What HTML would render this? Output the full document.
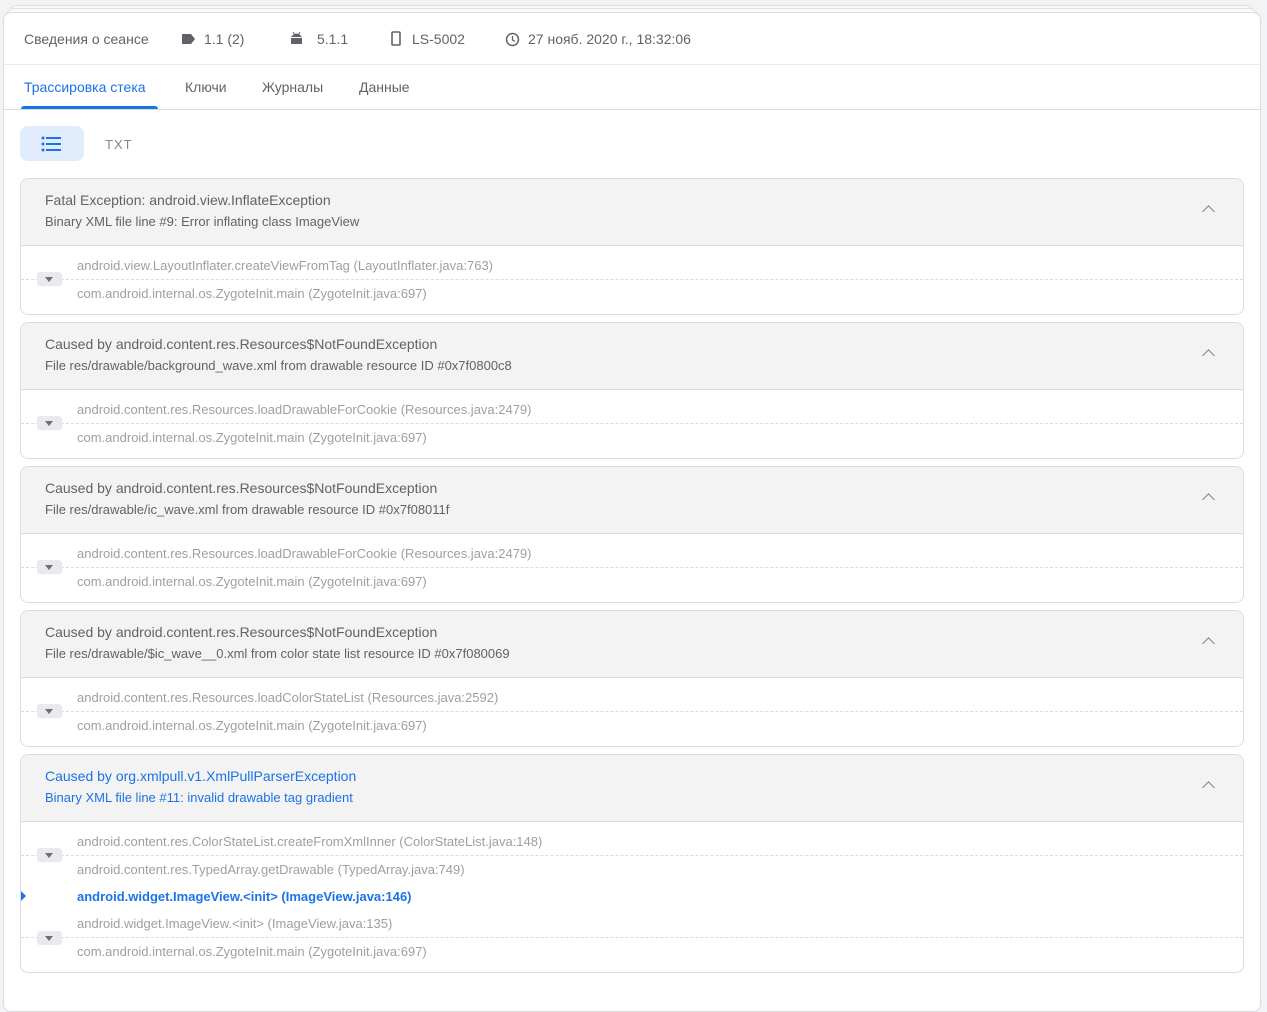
<!DOCTYPE html>
<html><head><meta charset="utf-8"><style>
*{box-sizing:border-box;margin:0;padding:0}
body{width:1267px;height:997px;background:#f1f3f4;font-family:"Liberation Sans",sans-serif;overflow:hidden;position:relative}
.stack1{position:absolute;left:9px;top:5px;width:1245px;height:20px;border:1px solid #e0e0e0;border-radius:8px;background:#fafafa}
.stack2{position:absolute;left:6px;top:8px;width:1251px;height:20px;border:1px solid #e0e0e0;border-radius:8px;background:#fafafa}
.card{position:absolute;left:3px;top:12px;width:1258px;height:1000px;background:#fff;border:1px solid #dadce0;border-radius:8px}
.hdr{position:absolute;top:0;left:0;right:0;height:52px;border-bottom:1px solid #e8eaed;font-size:14px;color:#5f6368}
.hdr span{position:absolute;top:18px}
.tabs{position:absolute;top:52px;left:0;right:0;height:45px;border-bottom:1px solid #dadce0;font-size:14px;color:#5f6368}
.tabs span{position:absolute;top:14px}
.ind{position:absolute;left:17px;top:41px;width:137px;height:3px;background:#1a73e8;border-radius:3px 3px 0 0}
.tgl{position:absolute;left:16px;top:113px;width:64px;height:35px;background:#e1ecfc;border-radius:8px}
.txt{position:absolute;left:101px;top:124px;font-size:13px;color:#888;letter-spacing:1px}
.ex{position:absolute;left:16px;width:1224px;border:1px solid #dadce0;border-radius:8px;overflow:hidden;background:#fff}
.eh{height:67px;background:#f3f3f3;border-bottom:1px solid #dadce0;position:relative;padding:12px 0 0 24px}
.t1{font-size:14px;color:#5f6368;line-height:18px}
.t2{font-size:13px;color:#5f6368;margin-top:5px;line-height:16px}
.blue .t1,.blue .t2{color:#1a73e8}
.chev{position:absolute;right:30px;top:28px;width:9px;height:9px;border-left:1.6px solid #80868b;border-top:1.6px solid #80868b;transform:rotate(45deg)}
.eb{position:relative;padding:6px 0}
.r{height:28px;line-height:28px;padding-left:56px;font-size:13px;color:#9aa0a6;border-bottom:1px dashed #dadce0}
.r:last-child{border-bottom:none}
.r.hl{color:#1a73e8;font-weight:bold}
.btn{position:absolute;left:16px;width:25px;height:14px;background:#e8eaed;border-radius:3px}
.btn:after{content:"";position:absolute;left:8px;top:5px;border-left:4.5px solid transparent;border-right:4.5px solid transparent;border-top:5px solid #6b7075}
.mk{position:absolute;left:-1px;border-top:6px solid transparent;border-bottom:6px solid transparent;border-left:6px solid #1a73e8}
</style></head><body>
<div class="stack1"></div><div class="stack2"></div>
<div class="card">
 <div class="hdr">
  <span style="left:20px">Сведения о сеансе</span>
  <svg style="position:absolute;left:178px;top:21px" width="13" height="10"><path d="M0 0H9L13 5L9 10H0Z" fill="#5f6368"/></svg>
  <span style="left:200px">1.1 (2)</span>
  <svg style="position:absolute;left:286px;top:18px" width="13" height="14"><path d="M1 6Q6.5 -1 12 6Z" fill="#5f6368"/><rect x="1" y="7" width="11" height="6" fill="#5f6368"/><path d="M3 1L4.5 3.5M10 1L8.5 3.5" stroke="#5f6368"/></svg>
  <span style="left:313px">5.1.1</span>
  <svg style="position:absolute;left:387px;top:18px" width="10" height="15"><rect x="1" y="1" width="8" height="13" rx="1" fill="none" stroke="#5f6368" stroke-width="1.6"/></svg>
  <span style="left:408px">LS-5002</span>
  <svg style="position:absolute;left:501px;top:19px" width="15" height="15"><circle cx="7.5" cy="7.5" r="6" fill="none" stroke="#5f6368" stroke-width="1.5"/><path d="M7.5 4V8L10 9.5" fill="none" stroke="#5f6368" stroke-width="1.3"/></svg>
  <span style="left:524px">27 нояб. 2020 г., 18:32:06</span>
 </div>
 <div class="tabs">
  <span style="left:20px;color:#1a73e8">Трассировка стека</span>
  <span style="left:181px">Ключи</span>
  <span style="left:258px">Журналы</span>
  <span style="left:355px">Данные</span>
  <div class="ind"></div>
 </div>
 <div class="tgl"><svg style="position:absolute;left:21px;top:10px" width="22" height="16"><g fill="#1a73e8"><circle cx="2" cy="2" r="1.5"/><circle cx="2" cy="8" r="1.5"/><circle cx="2" cy="14" r="1.5"/><rect x="5" y="1" width="15" height="2"/><rect x="5" y="7" width="15" height="2"/><rect x="5" y="13" width="15" height="2"/></g></svg></div>
 <div class="txt">TXT</div>

 <div class="ex" style="top:165px"><div class="eh"><div class="t1">Fatal Exception: android.view.InflateException</div><div class="t2">Binary XML file line #9: Error inflating class ImageView</div><div class="chev"></div></div>
  <div class="eb"><div class="btn" style="top:26px"></div><div class="r">android.view.LayoutInflater.createViewFromTag (LayoutInflater.java:763)</div><div class="r">com.android.internal.os.ZygoteInit.main (ZygoteInit.java:697)</div></div></div>

 <div class="ex" style="top:309px"><div class="eh"><div class="t1">Caused by android.content.res.Resources$NotFoundException</div><div class="t2">File res/drawable/background_wave.xml from drawable resource ID #0x7f0800c8</div><div class="chev"></div></div>
  <div class="eb"><div class="btn" style="top:26px"></div><div class="r">android.content.res.Resources.loadDrawableForCookie (Resources.java:2479)</div><div class="r">com.android.internal.os.ZygoteInit.main (ZygoteInit.java:697)</div></div></div>

 <div class="ex" style="top:453px"><div class="eh"><div class="t1">Caused by android.content.res.Resources$NotFoundException</div><div class="t2">File res/drawable/ic_wave.xml from drawable resource ID #0x7f08011f</div><div class="chev"></div></div>
  <div class="eb"><div class="btn" style="top:26px"></div><div class="r">android.content.res.Resources.loadDrawableForCookie (Resources.java:2479)</div><div class="r">com.android.internal.os.ZygoteInit.main (ZygoteInit.java:697)</div></div></div>

 <div class="ex" style="top:597px"><div class="eh"><div class="t1">Caused by android.content.res.Resources$NotFoundException</div><div class="t2">File res/drawable/$ic_wave__0.xml from color state list resource ID #0x7f080069</div><div class="chev"></div></div>
  <div class="eb"><div class="btn" style="top:26px"></div><div class="r">android.content.res.Resources.loadColorStateList (Resources.java:2592)</div><div class="r">com.android.internal.os.ZygoteInit.main (ZygoteInit.java:697)</div></div></div>

 <div class="ex blue" style="top:741px"><div class="eh"><div class="t1">Caused by org.xmlpull.v1.XmlPullParserException</div><div class="t2">Binary XML file line #11: invalid drawable tag gradient</div><div class="chev"></div></div>
  <div class="eb"><div class="btn" style="top:26px"></div><div class="mk" style="top:68px"></div><div class="btn" style="top:109px"></div>
  <div class="r">android.content.res.ColorStateList.createFromXmlInner (ColorStateList.java:148)</div>
  <div class="r" style="border-bottom:none;height:27px;line-height:27px">android.content.res.TypedArray.getDrawable (TypedArray.java:749)</div>
  <div class="r hl" style="border-bottom:none;height:27px;line-height:27px">android.widget.ImageView.&lt;init&gt; (ImageView.java:146)</div>
  <div class="r" style="height:28px;line-height:27px">android.widget.ImageView.&lt;init&gt; (ImageView.java:135)</div>
  <div class="r">com.android.internal.os.ZygoteInit.main (ZygoteInit.java:697)</div></div></div>
</div>
</body></html>
